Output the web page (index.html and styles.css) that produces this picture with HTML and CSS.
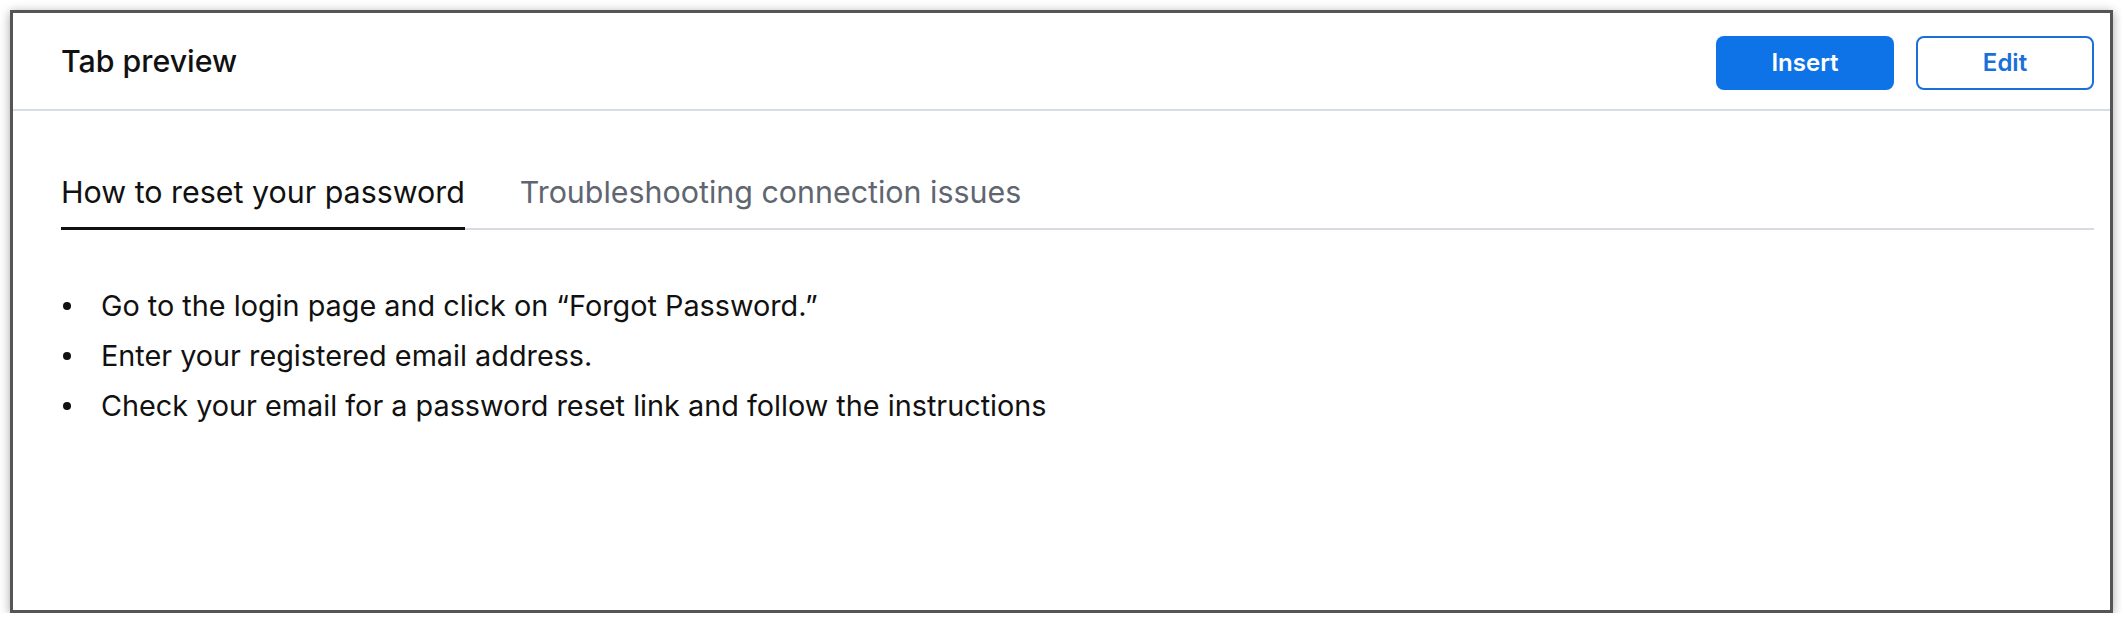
FILE: index.html
```
<!DOCTYPE html>
<html>
<head>
<meta charset="utf-8">
<link rel="stylesheet" href="styles.css">
</head>
<body>
<div class="frame">
  <header class="header">
    <h1 class="title">Tab preview</h1>
    <div class="actions">
      <button class="btn btn-primary">Insert</button>
      <button class="btn btn-outline">Edit</button>
    </div>
  </header>
  <section class="panel">
    <div class="tablist">
      <div class="tab active">How to reset your password</div>
      <div class="tab">Troubleshooting connection issues</div>
    </div>
    <ul class="steps">
      <li>Go to the login page and click on “Forgot Password.”</li>
      <li>Enter your registered email address.</li>
      <li>Check your email for a password reset link and follow the instructions</li>
    </ul>
  </section>
</div>
</body>
</html>
```
FILE: styles.css
```
html, body {
  margin: 0;
  padding: 0;
  background: #ffffff;
}
body {
  font-family: Inter, "Noto Sans", "Liberation Sans", sans-serif;
  color: #111111;
}
.frame {
  margin: 10px 0 0 10px;
  width: 2097px;
  height: 597px;
  border: 3px solid #555555;
  background: #ffffff;
  box-shadow: 0 2px 10px rgba(0, 0, 0, 0.35);
}
.header {
  height: 96px;
  border-bottom: 2px solid #d6dde5;
  display: flex;
  align-items: center;
  justify-content: space-between;
  padding: 0 16px 0 48px;
}
.title {
  margin: 0;
  font-size: 30.3px;
  font-weight: 500;
  color: #111111;
}
.actions {
  display: flex;
  gap: 22px;
  margin-top: 3px;
}
.btn {
  width: 178px;
  height: 54px;
  border-radius: 8px;
  font-family: Inter, "Noto Sans", sans-serif;
  font-size: 24px;
  font-weight: 600;
  cursor: pointer;
}
.btn-primary {
  background: #0f73e8;
  color: #ffffff;
  border: none;
}
.btn-outline {
  background: #ffffff;
  color: #1a6fd8;
  border: 2px solid #1a6fd8;
}
.panel {
  padding: 59px 16px 0 48px;
}
.tablist {
  display: flex;
  gap: 55px;
  border-bottom: 2px solid #d8dce2;
}
.tab {
  font-size: 30.4px;
  line-height: 44px;
  padding-bottom: 13px;
  border-bottom: 3px solid transparent;
  margin-bottom: -2px;
  color: #5f6670;
}
.tab.active {
  color: #111111;
  border-bottom-color: #111111;
}
.steps {
  list-style: none;
  margin: 51px 0 0;
  padding: 0;
  font-size: 28.8px;
  line-height: 50px;
}
.steps li {
  display: flex;
  align-items: center;
}
.steps li::before {
  content: "";
  flex: none;
  width: 8px;
  height: 8px;
  border-radius: 50%;
  background: #111111;
  margin: 0 30px 0 2px;
}
```
